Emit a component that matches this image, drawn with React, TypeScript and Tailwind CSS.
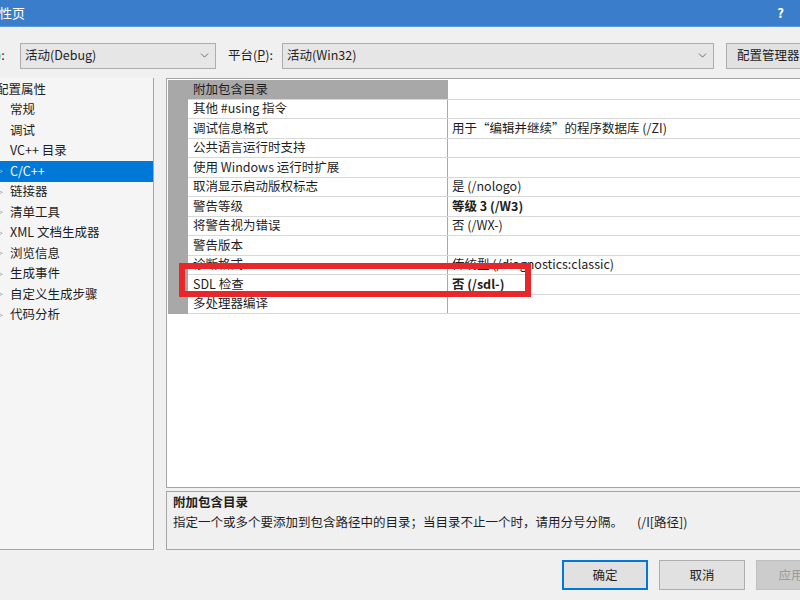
import { ChevronDown } from 'lucide-react';

const font = "font-['Noto_Sans_CJK_SC','Noto_Sans',sans-serif]";

const treeItems = [
  { label: '常规' },
  { label: '调试' },
  { label: 'VC++ 目录' },
  { label: 'C/C++', selected: true, arrow: true },
  { label: '链接器', arrow: true },
  { label: '清单工具', arrow: true },
  { label: 'XML 文档生成器', arrow: true },
  { label: '浏览信息', arrow: true },
  { label: '生成事件', arrow: true },
  { label: '自定义生成步骤', arrow: true },
  { label: '代码分析', arrow: true },
];

const props: { name: string; value?: string; bold?: boolean }[] = [
  { name: '附加包含目录' },
  { name: '其他 #using 指令' },
  { name: '调试信息格式', value: '用于“编辑并继续”的程序数据库 (/ZI)' },
  { name: '公共语言运行时支持' },
  { name: '使用 Windows 运行时扩展' },
  { name: '取消显示启动版权标志', value: '是 (/nologo)' },
  { name: '警告等级', value: '等级 3 (/W3)', bold: true },
  { name: '将警告视为错误', value: '否 (/WX-)' },
  { name: '警告版本' },
  { name: '诊断格式', value: '传统型 (/diagnostics:classic)' },
  { name: 'SDL 检查', value: '否 (/sdl-)', bold: true },
  { name: '多处理器编译' },
];

function Combo({ label, width }: { label: string; width: string }) {
  return (
    <div className={`flex h-[26px] ${width} shrink-0 items-center justify-between border border-[#adadad] bg-[#e6e6e6] pl-[4px] pr-[4px]`}>
      <span>{label}</span>
      <ChevronDown size={13} strokeWidth={1.5} className="text-[#555]" />
    </div>
  );
}

export default function App() {
  return (
    <div className={`relative flex h-[600px] w-[800px] flex-col overflow-hidden bg-[#f0f0f0] text-[12.5px] text-[#1e1e1e] ${font}`}>
      {/* title bar */}
      <div className="flex h-[27px] shrink-0 items-center justify-between border-b border-[#5d9ad8] bg-[#3a7ecb] pr-[16px] text-[13px] text-white">
        <span className="-ml-[1px]">性页</span>
        <span className="font-bold">?</span>
      </div>

      {/* configuration row */}
      <div className="flex h-[51px] shrink-0 items-center pt-[6px]">
        <span className="-ml-[3px] w-[23px] shrink-0">):</span>
        <Combo label="活动(Debug)" width="w-[196px]" />
        <span className="ml-[12px] w-[54px] shrink-0">
          平台(<span className="underline">P</span>):
        </span>
        <Combo label="活动(Win32)" width="w-[432px]" />
        <div className="ml-[12px] flex h-[26px] w-[100px] shrink-0 items-center whitespace-nowrap border border-[#adadad] bg-[#e1e1e1] pl-[10px]">
          配置管理器(O)...
        </div>
      </div>

      {/* main */}
      <div className="flex h-[472px] shrink-0">
        <div className="h-full w-[154px] shrink-0 border-r border-b border-[#a5a5a5] bg-[#f5f5f5] pt-[1px]">
          <div className="flex h-[20.5px] items-center -ml-[4px]">配置属性</div>
          {treeItems.map((t) => (
            <div
              key={t.label}
              className={`relative flex h-[20.5px] items-center pl-[10px] ${t.selected ? 'bg-[#0078d7] text-white' : ''}`}
            >
              {t.arrow && (
                <span className={`absolute -left-[5px] text-[8px] ${t.selected ? 'text-white' : 'text-[#444]'}`}>▷</span>
              )}
              {t.label}
            </div>
          ))}
        </div>

        <div className="ml-[12px] flex min-w-0 flex-1 flex-col">
          {/* property grid */}
          <div className="h-[410px] border border-r-0 border-[#a5a5a5] bg-white p-[1px] pr-0">
            <div className="flex">
              <div className="w-[20px] shrink-0 bg-[#a8a8a8]" />
              <div className="flex-1">
                {props.map((p, i) => (
                  <div key={p.name} className="flex h-[19.5px] border-b border-[#d8d8d8]">
                    <div
                      className={`flex w-[260px] shrink-0 items-center border-r border-[#a8a8a8] pl-[5px] ${i === 0 ? 'bg-[#a8a8a8]' : ''}`}
                    >
                      {p.name}
                    </div>
                    <div className={`flex flex-1 items-center pl-[4px] ${p.bold ? 'font-bold' : ''}`}>{p.value}</div>
                  </div>
                ))}
              </div>
            </div>
          </div>

          {/* description */}
          <div className="mt-[3px] flex-1 border border-r-0 border-[#a5a5a5] bg-[#f0f0f0] px-[6px] pt-0 leading-[20px]">
            <div className="font-bold">附加包含目录</div>
            <div className="flex">
              <span className="w-[464px] shrink-0">指定一个或多个要添加到包含路径中的目录；当目录不止一个时，请用分号分隔。</span>
              <span>(/I[路径])</span>
            </div>
          </div>
        </div>
      </div>

      {/* buttons */}
      <div className="flex flex-1 items-center gap-[11px] pl-[562px]">
        <button className="h-[30px] w-[86px] shrink-0 border-2 border-[#0078d7] bg-[#e1e1e1]">确定</button>
        <button className="h-[30px] w-[86px] shrink-0 border border-[#adadad] bg-[#e1e1e1]">取消</button>
        <button className="h-[30px] w-[86px] shrink-0 border border-[#bfbfbf] bg-[#cccccc] text-[#9a9a9a]">应用(A)</button>
      </div>

      {/* red highlight drawn over the screenshot */}
      <div className="pointer-events-none absolute left-[179px] top-[263px] h-[34px] w-[352px] border-[6px] border-[#e8272b]" />
    </div>
  );
}
